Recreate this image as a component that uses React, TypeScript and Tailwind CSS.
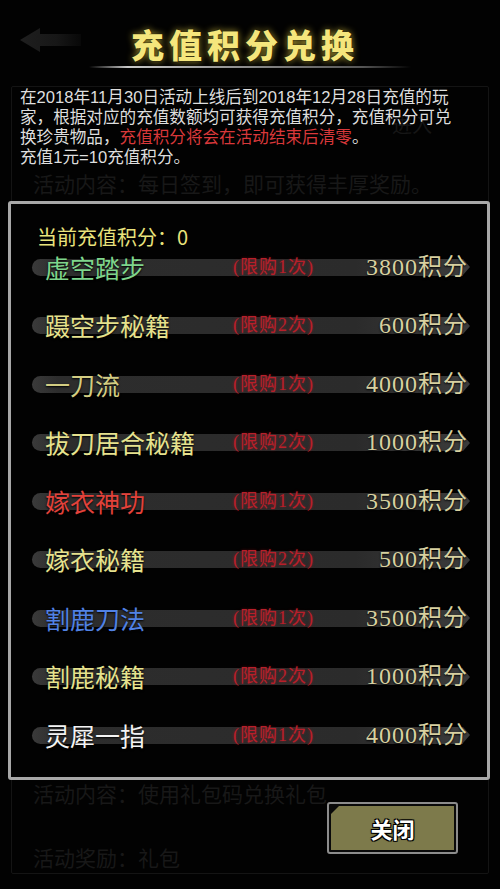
import React from "react";

type Item = {
    name: string;
    color: string;
    limit: number;
    price: number;
};

const ITEMS: Item[] = [
    { name: "虚空踏步", color: "text-[#7fd58c]", limit: 1, price: 3800 },
    { name: "蹑空步秘籍", color: "text-[#e6e18c]", limit: 2, price: 600 },
    { name: "一刀流", color: "text-[#d3cd82]", limit: 1, price: 4000 },
    { name: "拔刀居合秘籍", color: "text-[#e6e28e]", limit: 2, price: 1000 },
    { name: "嫁衣神功", color: "text-[#e2423b]", limit: 1, price: 3500 },
    { name: "嫁衣秘籍", color: "text-[#e6e28e]", limit: 2, price: 500 },
    { name: "割鹿刀法", color: "text-[#5182e4]", limit: 1, price: 3500 },
    { name: "割鹿秘籍", color: "text-[#e6e28e]", limit: 2, price: 1000 },
    { name: "灵犀一指", color: "text-[#f3f3f3]", limit: 1, price: 4000 },
];

function BackArrow() {
    return (
        <svg width="64" height="26" viewBox="0 0 64 26" className="absolute left-[19px] top-[27px]">
            <defs>
                <linearGradient id="arrowFade" x1="0" x2="1" y1="0" y2="0">
                    <stop offset="0" stopColor="#1f1f1f" />
                    <stop offset="0.6" stopColor="#171717" />
                    <stop offset="1" stopColor="#080808" />
                </linearGradient>
            </defs>
            <path d="M1 13 L21 1 L21 7 L62 7 L62 19 L21 19 L21 25 Z" fill="url(#arrowFade)" />
        </svg>
    );
}

function ItemRow({ item }: { item: Item }) {
    return (
        <div className="flex h-[34px] items-center pl-[21px] pr-[17px]">
            <div className="flex h-[17px] flex-1 items-center rounded-l-full bg-[linear-gradient(to_right,#3a3a3a,#2d2d2d_6%,#2b2b2b_75%,#3b3b3b)]">
                <span
                    className={`ml-[13px] w-[188px] shrink-0 whitespace-nowrap text-[25px] leading-[17px] [text-shadow:0_1px_2px_#000] ${item.color}`}
                >
                    {item.name}
                </span>
                <span className="whitespace-nowrap font-['Liberation_Serif','Noto_Sans_CJK_SC',serif] text-[18px] leading-[17px] tracking-[1px] text-[#b81f2a] [text-shadow:0_0_3px_rgba(200,20,30,0.45)]">
                    (限购{item.limit}次)
                </span>
                <span className="relative z-10 -mr-[5px] ml-auto whitespace-nowrap font-['Liberation_Serif','Noto_Sans_CJK_SC',serif] text-[24px] leading-[17px] tracking-[1px] text-[#d8d1a0] [text-shadow:0_1px_2px_#000]">
                    {item.price}积分
                </span>
            </div>
            <div className="h-0 w-0 border-y-[8.5px] border-l-[7px] border-y-transparent border-l-[#3b3b3b]" />
        </div>
    );
}

export default function App() {
    return (
        <div className="h-[889px] w-[500px] overflow-hidden bg-[#020202] font-['Noto_Sans_CJK_SC',sans-serif]">
            <header className="relative flex h-[86px] flex-col items-center pt-[24px]">
                <BackArrow />
                <h1 className="pr-[10px] text-[33px] font-black leading-[40px] tracking-[5px] text-[#f5e67c] [text-shadow:0_0_2px_#000,0_0_7px_rgba(240,215,70,0.75)]">
                    充值积分兑换
                </h1>
                <div className="mt-[2px] h-[2px] w-[322px] bg-[linear-gradient(to_right,transparent,#c8c8c8_12%,#8a8a8a_50%,#555_85%,transparent)]" />
            </header>

            <div className="relative mx-[11px] h-[788px] rounded-[2px] border border-[#141414]">
                {/* dimmed button of the page underneath */}
                <span className="absolute right-[56px] top-[28px] text-[20px] leading-none text-[#161616]">进入</span>

                <p className="relative px-[8px] pt-[1px] font-['Liberation_Sans','Noto_Sans_CJK_SC',sans-serif] text-[16.6px] leading-[20px] text-[#dedede]">
                    <span className="block whitespace-nowrap">在2018年11月30日活动上线后到2018年12月28日充值的玩</span>
                    <span className="block whitespace-nowrap">家，根据对应的充值数额均可获得充值积分，充值积分可兑</span>
                    <span className="block whitespace-nowrap">
                        换珍贵物品，<span className="text-[#d8383a]">充值积分将会在活动结束后清零</span>。
                    </span>
                    <span className="block whitespace-nowrap">充值1元=10充值积分。</span>
                </p>

                <div className="h-[30px] whitespace-nowrap pl-[21px] text-[21px] leading-[30px] text-[#181818]">
                    活动内容：每日签到，即可获得丰厚奖励。
                </div>

                <section className="-ml-[4px] -mr-[2px] mt-[3px] rounded-[3px] border-[3px] border-[#a8a8a8] bg-[#020202] pb-[25px]">
                    <div className="ml-[26px] mt-[21px] h-[24px] text-[20px] leading-[24px] text-[#e9e37c]">
                        当前充值积分：0
                    </div>
                    <div className="mt-[1px] flex flex-col gap-[24.5px]">
                        {ITEMS.map((item) => (
                            <ItemRow key={item.name} item={item} />
                        ))}
                    </div>
                </section>

                <div className="flex">
                    <div className="flex flex-col pl-[21px] text-[21px] leading-[26px] text-[#181818]">
                        <span className="whitespace-nowrap">活动内容：使用礼包码兑换礼包</span>
                        <span className="mt-[38px] whitespace-nowrap">活动奖励：礼包</span>
                    </div>
                    <button className="ml-auto mr-[30px] mt-[22px] h-[52px] w-[149px] rounded-[3px] border-2 border-[#8c8c8c] bg-[#0a0a0a] p-[2px]">
                        <div className="flex h-full w-full items-center justify-center bg-[#7d7a4b] [clip-path:polygon(8px_0,100%_0,100%_100%,0_100%,0_8px)]">
                            <span className="text-[22px] font-bold leading-none text-white [text-shadow:-1px_-1px_0_#000,1px_-1px_0_#000,-1px_1px_0_#000,1px_1px_0_#000,0_0_2px_#000]">
                                关闭
                            </span>
                        </div>
                    </button>
                </div>
            </div>
        </div>
    );
}
